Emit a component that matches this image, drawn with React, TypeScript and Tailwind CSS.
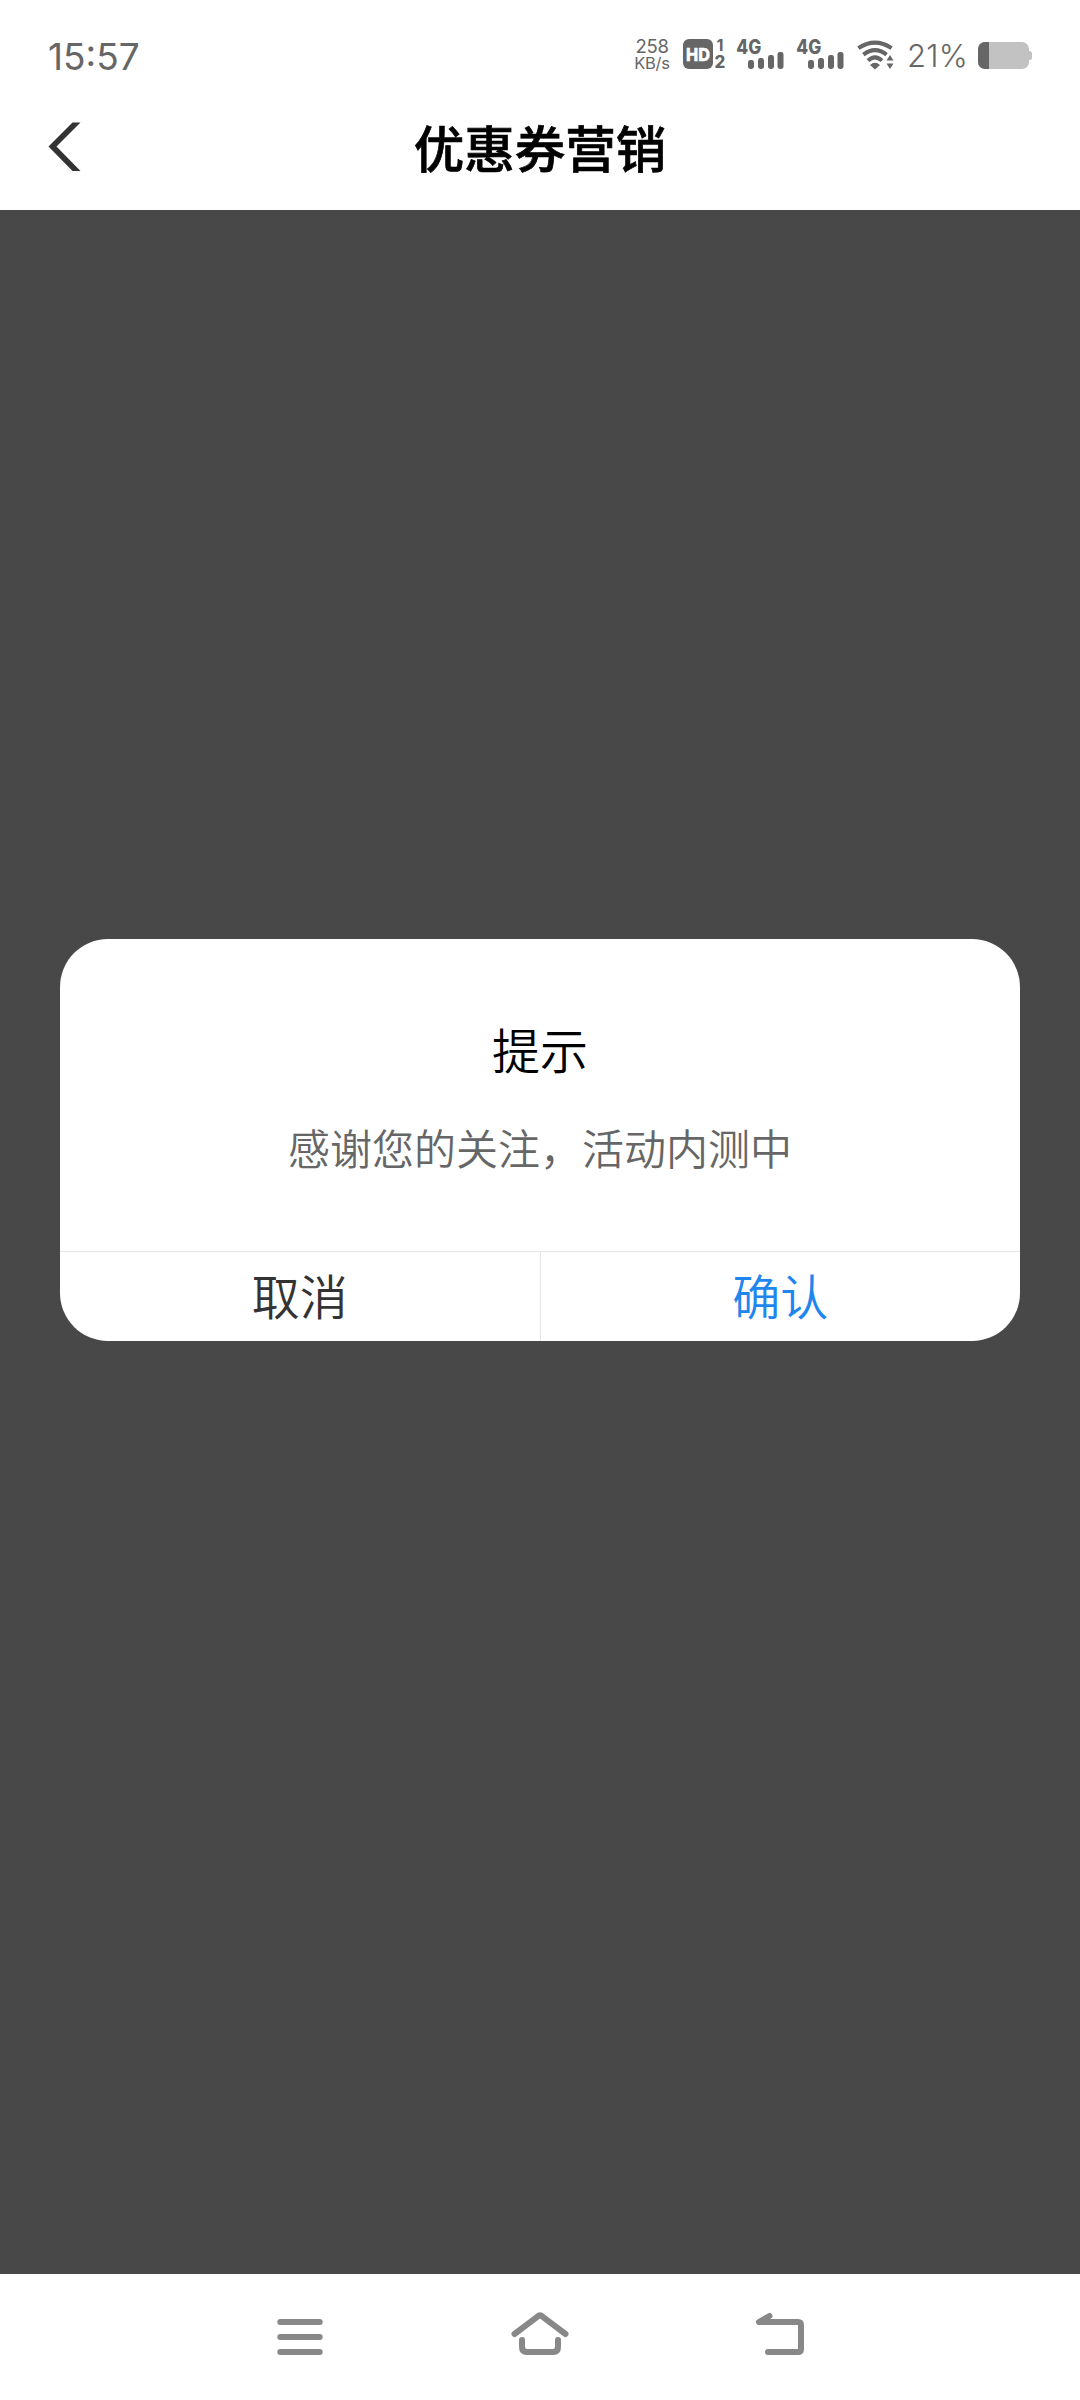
// 优惠券营销页面 - 内测提示弹窗

import type { ReactNode } from 'react';

interface DialogProps {
  title: string;
  message: string;
  cancelText: string;
  confirmText: string;
}

// 信号格：x 偏移与高度
const signalBars = [
  { x: 12, h: 9 },
  { x: 22, h: 11 },
  { x: 32, h: 14 },
  { x: 41.5, h: 17 },
];

function HdIcon() {
  return (
    <svg width="46" height="44" viewBox="0 -6 46 44" fill="#666" className="-mt-[6px] ml-[14px]">
      <rect x="0" y="0" width="30" height="30" rx="6" />
      <text x="3" y="21.6" fontSize="18" fontWeight="800" fill="#fff" stroke="#fff" strokeWidth="0.4" textLength="24" lengthAdjust="spacingAndGlyphs">
        HD
      </text>
      <text x="33.5" y="12" fontSize="16.5" fontWeight="700" textLength="7" lengthAdjust="spacingAndGlyphs">1</text>
      <text x="31.6" y="29.4" fontSize="17" fontWeight="800">2</text>
    </svg>
  );
}

function SignalIcon() {
  return (
    <svg width="48" height="44" viewBox="0 -6 48 44" fill="#666">
      <text x="0.3" y="15" fontSize="20" fontWeight="800" textLength="25" lengthAdjust="spacingAndGlyphs">
        4G
      </text>
      {signalBars.map((bar) => (
        <rect key={bar.x} x={bar.x} y={30 - bar.h} width="6" height={bar.h} rx="2.4" />
      ))}
    </svg>
  );
}

function WifiIcon() {
  return (
    <svg width="38" height="32" viewBox="0 0 38 32" className="ml-3">
      <g fill="none" stroke="#666" strokeWidth="4">
        <path d="M1.4 9.2 Q18 -2 34.6 9.2" />
        <path d="M6.4 15.6 Q18 6.6 29.6 15.6" />
        <path d="M11 21.6 Q18 15 25 21.6" />
      </g>
      <path d="M13 26 Q18 21.5 23 26 L18 30.5 Z" fill="#666" />
      <path d="M33 16 L36.5 21.4 H29.5 Z M29.5 24.6 H36.5 L33 30 Z" fill="#666" />
    </svg>
  );
}

function BatteryIcon() {
  return (
    <svg width="54" height="28" viewBox="0 0 54 28">
      <rect x="46" y="9" width="8" height="9" rx="2.5" fill="#c2c2c2" />
      <rect x="0" y="0" width="51" height="27" rx="7" fill="#c2c2c2" />
      <path d="M11 0 V27 H7 A7 7 0 0 1 0 20 V7 A7 7 0 0 1 7 0 Z" fill="#666" />
    </svg>
  );
}

function StatusBar() {
  return (
    <div className="flex h-[110px] items-start pl-12 pr-12 pt-[38px] font-['Inter','Noto_Sans_CJK_SC',sans-serif] text-[#666]">
      <span className="mt-px text-[37px] leading-[36px]">15:57</span>
      <div className="ml-auto flex items-start pt-px">
        <div className="-mt-px flex w-[34px] flex-col items-center whitespace-nowrap">
          <span className="text-[18.5px] leading-[17px] tracking-[-0.3px]">258</span>
          <span className="text-[16.5px] leading-[17px] tracking-[-0.3px]">KB/s</span>
        </div>
        <HdIcon />
        <div className="-mt-[6px] ml-[7px] mr-px flex gap-3">
          <SignalIcon />
          <SignalIcon />
        </div>
        <WifiIcon />
        <span className="ml-3 mt-px w-[61px] whitespace-nowrap text-[31px] font-[350] leading-[31px] tracking-[0.2px]">21%</span>
        <div className="ml-[10px] pt-[3px]">
          <BatteryIcon />
        </div>
      </div>
    </div>
  );
}

function TitleBar({ title }: { title: string }) {
  return (
    <div className="grid h-[100px] grid-cols-[120px_1fr_120px] items-start">
      <button className="pl-12 pt-3" aria-label="返回">
        <svg width="34" height="50" viewBox="0 0 34 50" fill="#333">
          <path d="M24.5 0.5 H32.5 L8.5 24.5 L32.5 49 H24.5 L0.5 24.5 Z" />
        </svg>
      </button>
      <h1 className="pt-[10px] text-center text-[50.5px] font-medium leading-[53px] text-black [-webkit-text-stroke:0.7px_#000]">{title}</h1>
    </div>
  );
}

function Dialog({ title, message, cancelText, confirmText }: DialogProps) {
  return (
    <div className="flex h-[402px] w-[960px] flex-col overflow-hidden rounded-[48px] bg-white font-[350]">
      <div className="flex-1 pt-[74px] text-center">
        <h2 className="text-[48px] font-[350] leading-[70px] text-black">{title}</h2>
        <p className="mt-[34px] text-[42px] leading-[60px] text-[#666]">{message}</p>
      </div>
      <div className="flex h-[90px] border-t border-[#e6e6e6] text-[48px]">
        <button className="flex-1 border-r border-[#e6e6e6] pb-1 leading-[85px] text-[#333]">{cancelText}</button>
        <button className="flex-1 pb-1 leading-[85px] text-[#1f86ee]">{confirmText}</button>
      </div>
    </div>
  );
}

function NavIcon({ label, children }: { label: string; children: ReactNode }) {
  return (
    <button aria-label={label}>
      <svg width="60" height="60" viewBox="0 0 60 60" fill="none" stroke="#888" strokeWidth="6" strokeLinecap="round" strokeLinejoin="round">
        {children}
      </svg>
    </button>
  );
}

function NavBar() {
  return (
    <div className="flex h-[126px] items-start justify-center gap-[180px] bg-white pt-[33px]">
      <NavIcon label="最近任务">
        <path d="M10.3 15 H49.7 M10.3 30 H49.7 M10.3 45 H49.7" />
      </NavIcon>
      <NavIcon label="主页">
        <path d="M4.5 27 L28.5 8.8 Q30 7.8 31.5 8.8 L55.5 27" />
        <path d="M12 33 V40 Q12 45 17 45 H43 Q48 45 48 40 V33" />
      </NavIcon>
      <NavIcon label="后退">
        <path d="M19.5 9 L9 15 H48 Q51 15 51 18 V42 Q51 45 48 45 H18" />
      </NavIcon>
    </div>
  );
}

export default function App() {
  return (
    <div className="flex h-[2400px] w-[1080px] flex-col bg-white font-['Noto_Sans_CJK_SC',sans-serif]">
      <StatusBar />
      <TitleBar title="优惠券营销" />
      {/* 遮罩区 */}
      <main className="flex flex-1 items-start justify-center bg-[#484848] pt-[729px]">
        <Dialog
          title="提示"
          message="感谢您的关注，活动内测中"
          cancelText="取消"
          confirmText="确认"
        />
      </main>
      <NavBar />
    </div>
  );
}
